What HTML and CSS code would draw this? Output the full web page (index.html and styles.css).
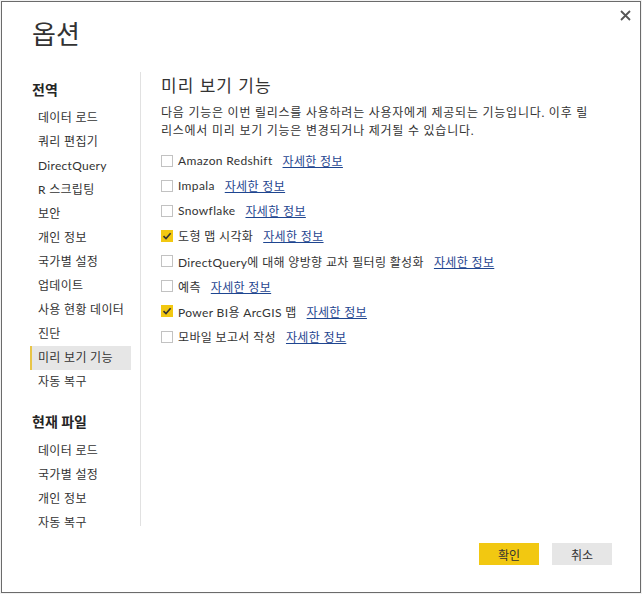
FILE: index.html
```html
<!DOCTYPE html>
<html lang="ko">
<head>
    <meta charset="UTF-8">
    <title>옵션</title>
    <link rel="stylesheet" href="styles.css">
</head>
<body>

    <div class="dialog">
        <div class="header">
            <h1>옵션</h1>
            <button class="close-btn" title="닫기">
                <svg width="11" height="11" viewBox="0 0 11 11"><path d="M1 1 L10 10 M10 1 L1 10" stroke="#555" stroke-width="1.8" fill="none"/></svg>
            </button>
        </div>

        <div class="body">
            <div class="nav">
                <div class="nav-title">전역</div>
                <ul class="nav-list">
                    <li>데이터 로드</li>
                    <li>쿼리 편집기</li>
                    <li>DirectQuery</li>
                    <li>R 스크립팅</li>
                    <li>보안</li>
                    <li>개인 정보</li>
                    <li>국가별 설정</li>
                    <li>업데이트</li>
                    <li>사용 현황 데이터</li>
                    <li>진단</li>
                    <li class="active">미리 보기 기능</li>
                    <li>자동 복구</li>
                </ul>
                <div class="nav-title second">현재 파일</div>
                <ul class="nav-list">
                    <li>데이터 로드</li>
                    <li>국가별 설정</li>
                    <li>개인 정보</li>
                    <li>자동 복구</li>
                </ul>
            </div>

            <div class="content">
                <h2>미리 보기 기능</h2>
                <p class="desc">다음 기능은 이번 릴리스를 사용하려는 사용자에게 제공되는 기능입니다. 이후 릴리스에서 미리 보기 기능은 변경되거나 제거될 수 있습니다.</p>

                <div class="options">
                    <label class="option"><span class="box"></span>Amazon Redshift<a href="#">자세한 정보</a></label>
                    <label class="option"><span class="box"></span>Impala<a href="#">자세한 정보</a></label>
                    <label class="option"><span class="box"></span>Snowflake<a href="#">자세한 정보</a></label>
                    <label class="option"><span class="box checked"><svg width="12" height="12" viewBox="0 0 12 12"><path d="M2.5 6.2 L5 8.6 L9.6 3.2" stroke="#333" stroke-width="1.6" fill="none"/></svg></span>도형 맵 시각화<a href="#">자세한 정보</a></label>
                    <label class="option"><span class="box"></span>DirectQuery에 대해 양방향 교차 필터링 활성화<a href="#">자세한 정보</a></label>
                    <label class="option"><span class="box"></span>예측<a href="#">자세한 정보</a></label>
                    <label class="option"><span class="box checked"><svg width="12" height="12" viewBox="0 0 12 12"><path d="M2.5 6.2 L5 8.6 L9.6 3.2" stroke="#333" stroke-width="1.6" fill="none"/></svg></span>Power BI용 ArcGIS 맵<a href="#">자세한 정보</a></label>
                    <label class="option"><span class="box"></span>모바일 보고서 작성<a href="#">자세한 정보</a></label>
                </div>
            </div>
        </div>

        <div class="footer">
            <button class="btn btn-ok">확인</button>
            <button class="btn btn-cancel">취소</button>
        </div>
    </div>

</body>
</html>
```

FILE: styles.css
```css
body {
    margin: 0;
    padding: 1px;
    background-color: #f2f2f2;
    font-family: Lato, "Noto Sans CJK KR", sans-serif;
    color: #333;
}
.dialog {
    width: 640px;
    height: 592px;
    box-sizing: border-box;
    border: 1px solid #6b6b6b;
    background-color: #fff;
    display: flex;
    flex-direction: column;
}
.header {
    display: flex;
    justify-content: space-between;
    align-items: flex-start;
    padding: 8px 9px 0 30px;
}
h1 {
    margin: 8px 0 0 0;
    font-size: 26px;
    line-height: 32px;
    font-weight: normal;
    color: #333;
}
.close-btn {
    border: none;
    background: none;
    padding: 0;
    width: 11px;
    height: 11px;
    cursor: pointer;
}
.close-btn svg {
    display: block;
}
.body {
    display: flex;
    height: 454px;
    margin-top: 22px;
    margin-left: 28px;
}
.nav {
    width: 111px;
    border-right: 1px solid #e1e1e1;
    padding-top: 6px;
    box-sizing: border-box;
}
.nav-title {
    font-size: 14px;
    font-weight: bold;
    line-height: 24px;
    padding-left: 2px;
    color: #252525;
}
.nav-title.second {
    margin-top: 16px;
}
.nav-list {
    list-style: none;
    margin: 4px 0 0 0;
    padding: 0;
}
.nav-title.second + .nav-list {
    margin-top: 5px;
}
.nav-list li {
    width: 101px;
    box-sizing: border-box;
    height: 24px;
    line-height: 24px;
    font-size: 12px;
    letter-spacing: 0.3px;
    padding-left: 8px;
    color: #333;
    white-space: nowrap;
}
.nav-list li.active {
    background-color: #e6e6e6;
    border-left: 2px solid #e8c547;
    padding-left: 6px;
}
.content {
    flex: 1;
    padding: 2px 0 0 20px;
}
h2 {
    margin: 0;
    font-size: 17px;
    line-height: 24px;
    letter-spacing: 1px;
    font-weight: normal;
    color: #333;
}
.desc {
    width: 432px;
    margin: 6px 0 0 0;
    font-size: 12px;
    line-height: 18px;
    letter-spacing: 0.75px;
    color: #333;
}
.options {
    margin-top: 8px;
}
.option {
    display: flex;
    align-items: center;
    height: 25.15px;
    font-size: 12px;
    letter-spacing: 0.35px;
    color: #333;
    white-space: nowrap;
}
.box {
    width: 12px;
    height: 12px;
    box-sizing: border-box;
    border: 1px solid #c2c2c2;
    background-color: #fff;
    margin-right: 5px;
}
.box.checked {
    border: none;
    background-color: #f2c811;
}
.box svg {
    display: block;
}
.option a {
    margin-left: 10px;
    color: #1f4690;
    text-decoration: underline;
}
.footer {
    margin-top: auto;
    display: flex;
    justify-content: flex-end;
    gap: 13px;
    padding: 0 28px 27px 0;
}
.btn {
    width: 60px;
    height: 22px;
    border: none;
    font-family: inherit;
    font-size: 12px;
    color: #333;
    cursor: pointer;
}
.btn-ok {
    background-color: #f2c811;
}
.btn-cancel {
    background-color: #e6e6e6;
}
```
